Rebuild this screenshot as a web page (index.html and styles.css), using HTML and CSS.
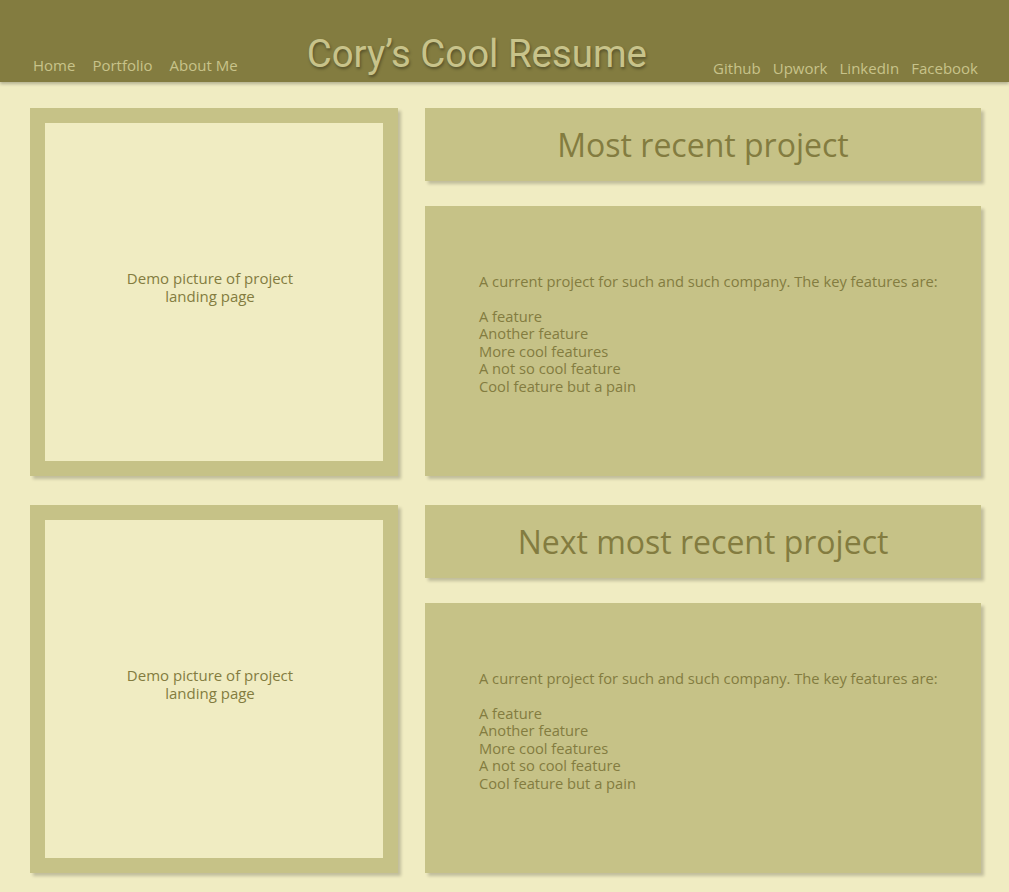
FILE: index.html
```html
<!DOCTYPE html>
<html>
<head>
<meta charset="utf-8">
<link rel="stylesheet" href="styles.css">
</head>
<body>
<header class="top">
  <nav class="nav nav-left">
    <a>Home</a>
    <a>Portfolio</a>
    <a>About Me</a>
  </nav>
  <h1 class="title">Cory’s Cool Resume</h1>
  <nav class="nav nav-right">
    <a>Github</a>
    <a>Upwork</a>
    <a>LinkedIn</a>
    <a>Facebook</a>
  </nav>
</header>
<main class="projects">
  <section class="project">
    <div class="picture"><p>Demo picture of project<br>landing page</p></div>
    <div class="info">
      <h2 class="heading">Most recent project</h2>
      <div class="desc">
        <p>A current project for such and such company. The key features are:<br><br>A feature<br>Another feature<br>More cool features<br>A not so cool feature<br>Cool feature but a pain</p>
      </div>
    </div>
  </section>
  <section class="project">
    <div class="picture"><p>Demo picture of project<br>landing page</p></div>
    <div class="info">
      <h2 class="heading">Next most recent project</h2>
      <div class="desc">
        <p>A current project for such and such company. The key features are:<br><br>A feature<br>Another feature<br>More cool features<br>A not so cool feature<br>Cool feature but a pain</p>
      </div>
    </div>
  </section>
</main>
</body>
</html>
```
FILE: styles.css
```css
html, body {
  margin: 0;
  padding: 0;
}
body {
  background: #f0ecc2;
  font-family: "Open Sans", "DejaVu Sans", sans-serif;
  color: #837c40;
}
.top {
  height: 82px;
  background: #837c40;
  box-shadow: 0 2px 3px rgba(0,0,0,0.25);
  display: flex;
  align-items: flex-end;
  padding: 0 31px 0 33px;
  box-sizing: border-box;
}
.nav {
  display: flex;
  font-size: 15px;
  color: #c8c38a;
}
.nav-left {
  gap: 17px;
  padding-bottom: 7px;
}
.nav-right {
  margin-left: auto;
  gap: 12px;
  padding-bottom: 4px;
}
.title {
  margin: 0 0 6px 69px;
  font-family: Roboto, "Liberation Sans", sans-serif;
  font-weight: 400;
  font-size: 38.4px;
  line-height: 44px;
  color: #c8c38a;
  text-shadow: 1px 2px 3px rgba(0,0,0,0.35);
}
.projects {
  padding: 26px 28px 20px 30px;
  display: flex;
  flex-direction: column;
  gap: 29px;
}
.project {
  display: grid;
  grid-template-columns: 368px 1fr;
  gap: 27px;
}
.picture {
  height: 368px;
  box-sizing: border-box;
  border: 15px solid #c6c287;
  background: #f0ecc2;
  box-shadow: 3px 3px 3px rgba(0,0,0,0.2);
  display: flex;
  align-items: center;
  justify-content: center;
  text-align: center;
  font-size: 15px;
  line-height: 18px;
  padding: 0 8px 10px 0;
}
.picture p {
  margin: 0;
}
.info {
  display: flex;
  flex-direction: column;
  gap: 25px;
}
.heading {
  margin: 0;
  height: 73px;
  background: #c6c287;
  box-shadow: 3px 3px 3px rgba(0,0,0,0.2);
  display: flex;
  align-items: center;
  justify-content: center;
  font-weight: 400;
  font-size: 32px;
}
.desc {
  height: 270px;
  background: #c6c287;
  box-shadow: 3px 3px 3px rgba(0,0,0,0.2);
  display: flex;
  align-items: center;
  padding: 0 20px 14px 54px;
  box-sizing: border-box;
  font-size: 14.7px;
  line-height: 17.5px;
}
.desc p {
  margin: 0;
}
```
